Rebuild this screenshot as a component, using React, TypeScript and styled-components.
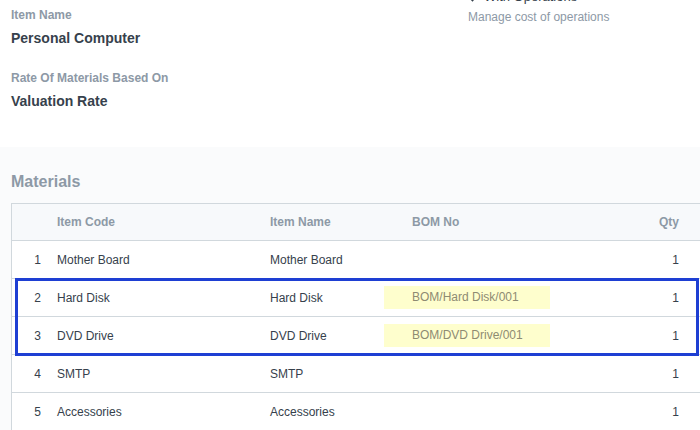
import React from "react";
import styled, { createGlobalStyle } from "styled-components";

const GlobalStyle = createGlobalStyle`
  html, body {
    margin: 0;
    padding: 0;
    overflow: hidden;
    background: #fff;
  }
  body {
    font-family: "Liberation Sans", Arial, sans-serif;
    color: #36414c;
  }
`;

const Page = styled.div`
  width: 700px;
  height: 430px;
  overflow: hidden;
`;

const FormSection = styled.section`
  height: 147px;
  display: grid;
  grid-template-columns: 457px 1fr;
  padding: 0 0 0 11px;
  box-sizing: border-box;
  background: #fff;
`;

const Column = styled.div<{ $shift?: number }>`
  display: flex;
  flex-direction: column;
  padding-top: 6px;
  margin-top: ${(p) => p.$shift ?? 0}px;
`;

const Label = styled.div<{ $gap?: number }>`
  font-size: 12px;
  font-weight: bold;
  line-height: 18px;
  color: #8d99a6;
  margin-top: ${(p) => p.$gap ?? 0}px;
`;

const Value = styled.div`
  font-size: 14px;
  font-weight: bold;
  line-height: 20px;
  margin-top: 4px;
  color: #36414c;
`;

const CheckRow = styled.div`
  display: flex;
  align-items: center;
  gap: 4px;
  font-size: 13px;
  line-height: 18px;
  color: #36414c;
`;

const Help = styled.div`
  font-size: 12px;
  line-height: 18px;
  margin-top: 2px;
  color: #8d99a6;
`;

const MaterialsSection = styled.section`
  background: #fafbfc;
  padding: 24px 0 0 11px;
  height: 283px;
  box-sizing: border-box;
`;

const Heading = styled.h3`
  margin: 0 0 10px;
  font-size: 16px;
  font-weight: bold;
  line-height: 22px;
  color: #8d99a6;
`;

const Table = styled.div`
  width: 709px;
  border: 1px solid #d1d8dd;
  border-bottom: none;
  background: #fff;
`;

const Row = styled.div<{ $head?: boolean }>`
  display: grid;
  grid-template-columns: 37px 213px 122px 166px 1fr;
  align-items: center;
  height: ${(p) => (p.$head ? 37 : 38)}px;
  box-sizing: border-box;
  border-bottom: 1px solid #d1d8dd;
  background: ${(p) => (p.$head ? "#f7f9fb" : "#fff")};
  font-size: 12px;
  font-weight: ${(p) => (p.$head ? "bold" : "normal")};
  color: ${(p) => (p.$head ? "#8d99a6" : "#36414c")};
`;

const Cell = styled.div<{ $align?: "left" | "right"; $pad?: number }>`
  text-align: ${(p) => p.$align ?? "left"};
  padding-left: ${(p) => (p.$align === "right" ? 0 : p.$pad ?? 8)}px;
  padding-right: ${(p) => (p.$align === "right" ? p.$pad ?? 8 : 0)}px;
  white-space: nowrap;
`;

const BomLink = styled.span`
  display: block;
  height: 23px;
  line-height: 23px;
  padding-left: 28px;
  background: #fefecd;
  color: #8e8b72;
`;

const Highlight = styled.div`
  position: relative;

  &::after {
    content: "";
    position: absolute;
    top: -1px;
    bottom: -1px;
    left: 3px;
    right: 22px;
    border: 3px solid #1e3fd3;
    pointer-events: none;
  }
`;

type Material = { idx: number; code: string; name: string; bom?: string; qty: number };

const materials: Material[] = [
  { idx: 1, code: "Mother Board", name: "Mother Board", qty: 1 },
  { idx: 2, code: "Hard Disk", name: "Hard Disk", bom: "BOM/Hard Disk/001", qty: 1 },
  { idx: 3, code: "DVD Drive", name: "DVD Drive", bom: "BOM/DVD Drive/001", qty: 1 },
  { idx: 4, code: "SMTP", name: "SMTP", qty: 1 },
  { idx: 5, code: "Accessories", name: "Accessories", qty: 1 },
];

const MaterialRow: React.FC<{ m: Material }> = ({ m }) => (
  <Row>
    <Cell $align="right">{m.idx}</Cell>
    <Cell>{m.code}</Cell>
    <Cell>{m.name}</Cell>
    <Cell $pad={0}>{m.bom && <BomLink>{m.bom}</BomLink>}</Cell>
    <Cell $align="right" $pad={42}>
      {m.qty}
    </Cell>
  </Row>
);

const CheckIcon = () => (
  <svg width="12" height="12" viewBox="0 0 12 12">
    <path d="M1.5 6.5 L4.5 9.5 L10.5 2.5" fill="none" stroke="#36414c" strokeWidth="1.6" />
  </svg>
);

const App: React.FC = () => {
  const highlighted = materials.filter((m) => m.bom);
  const first = materials.slice(0, 1);
  const rest = materials.slice(3);

  return (
    <Page>
      <GlobalStyle />
      <FormSection>
        <Column>
          <Label>Item Name</Label>
          <Value>Personal Computer</Value>
          <Label $gap={21}>Rate Of Materials Based On</Label>
          <Value>Valuation Rate</Value>
        </Column>
        <Column $shift={-18}>
          <CheckRow>
            <CheckIcon />
            With Operations
          </CheckRow>
          <Help>Manage cost of operations</Help>
        </Column>
      </FormSection>
      <MaterialsSection>
        <Heading>Materials</Heading>
        <Table>
          <Row $head>
            <Cell />
            <Cell>Item Code</Cell>
            <Cell>Item Name</Cell>
            <Cell $pad={28}>BOM No</Cell>
            <Cell $align="right" $pad={42}>
              Qty
            </Cell>
          </Row>
          {first.map((m) => (
            <MaterialRow key={m.idx} m={m} />
          ))}
          <Highlight>
            {highlighted.map((m) => (
              <MaterialRow key={m.idx} m={m} />
            ))}
          </Highlight>
          {rest.map((m) => (
            <MaterialRow key={m.idx} m={m} />
          ))}
        </Table>
      </MaterialsSection>
    </Page>
  );
};

export default App;
